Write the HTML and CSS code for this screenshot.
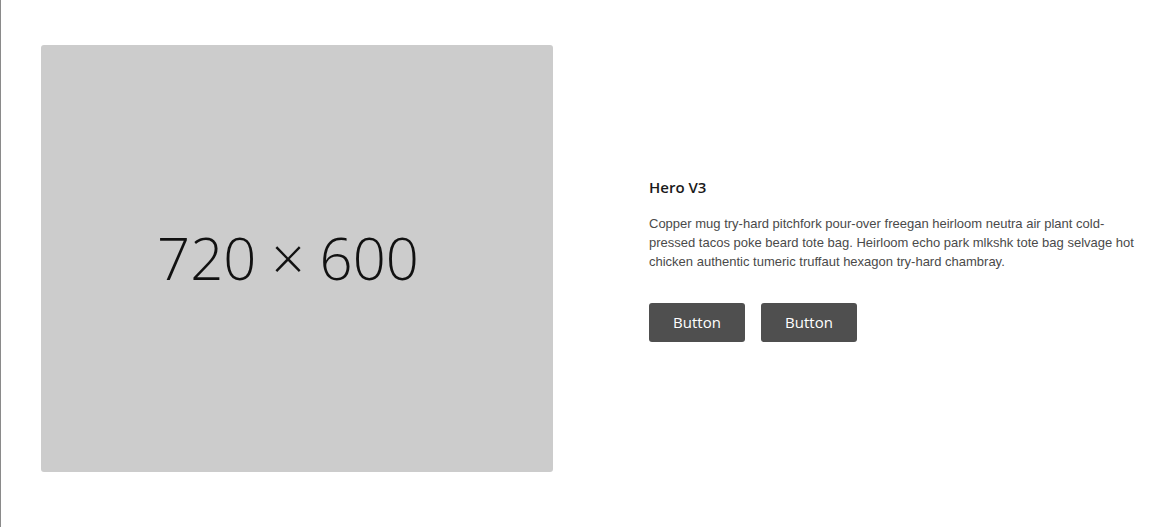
FILE: index.html
```html
<!DOCTYPE html>
<html>
<head>
<meta charset="utf-8">
<link rel="stylesheet" href="styles.css">
</head>
<body>
<section class="hero">
  <div class="media">
    <div class="placeholder"><span>720 × 600</span></div>
  </div>
  <div class="content">
    <h2 class="title">Hero V3</h2>
    <p class="desc">Copper mug try-hard pitchfork pour-over freegan heirloom neutra air plant cold-pressed tacos poke beard tote bag. Heirloom echo park mlkshk tote bag selvage hot chicken authentic tumeric truffaut hexagon try-hard chambray.</p>
    <div class="actions">
      <button class="btn">Button</button>
      <button class="btn">Button</button>
    </div>
  </div>
</section>
</body>
</html>
```
FILE: styles.css
```css
html, body {
  margin: 0;
  padding: 0;
  background: #fff;
}
body {
  border-left: 1px solid #8a8a8a;
  min-height: 527px;
  box-sizing: border-box;
}
.hero {
  display: flex;
  align-items: center;
  gap: 96px;
  padding: 45px 24px 55px 40px;
}
.media {
  flex: 0 0 512px;
}
.placeholder {
  width: 512px;
  height: 427px;
  background: #cccccc;
  border-radius: 3px;
  display: flex;
  align-items: center;
  justify-content: center;
}
.placeholder span {
  font-family: "Open Sans", sans-serif;
  font-weight: 300;
  font-size: 58px;
  color: #111;
  margin-right: 18px;
  margin-bottom: 2px;
}
.content {
  flex: 1;
}
.title {
  margin: 0 0 16px;
  font-family: "Open Sans", sans-serif;
  font-size: 15px;
  font-weight: 600;
  color: #1a1a1a;
  line-height: 22px;
}
.desc {
  margin: 0 0 32px;
  font-family: "Liberation Sans", Arial, sans-serif;
  font-size: 13px;
  line-height: 19px;
  color: #4a4a4a;
  max-width: 490px;
}
.actions {
  display: flex;
  gap: 16px;
}
.btn {
  height: 39px;
  width: 96px;
  border: 0;
  border-radius: 3px;
  background: #4f4f4f;
  color: #fff;
  font-family: "Open Sans", sans-serif;
  font-size: 15px;
  padding: 0;
}
```
